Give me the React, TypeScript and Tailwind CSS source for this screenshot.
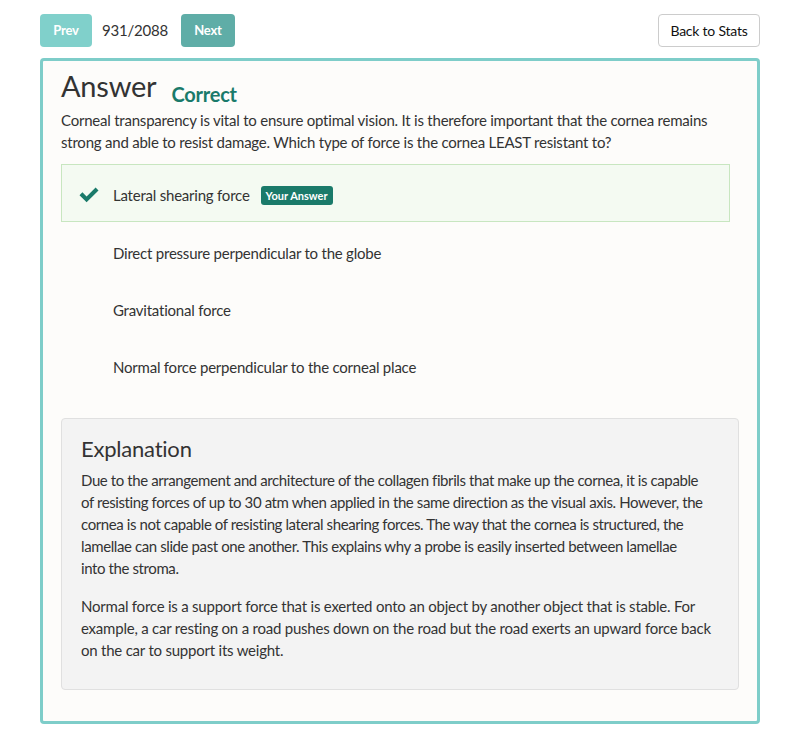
const OPTIONS = [
  { text: "Lateral shearing force", chosen: true },
  { text: "Direct pressure perpendicular to the globe", chosen: false },
  { text: "Gravitational force", chosen: false },
  { text: "Normal force perpendicular to the corneal place", chosen: false },
]

function Check() {
  return (
    <svg width="22" height="16" viewBox="0 0 22 16" aria-hidden>
      <path
        d="M1.5 8.2 L4.4 5.3 L8.6 9.5 L17.6 0.5 L20.5 3.4 L8.6 15.3 Z"
        fill="#1a7a6a"
      />
    </svg>
  )
}

export default function App() {
  return (
    <main className="min-h-[748px] bg-white pt-[14px] pb-6 font-['Lato',sans-serif] tracking-[-0.22px] text-[#333]">
      {/* Pager */}
      <div className="flex items-center justify-between px-[40px]">
        <div className="flex items-center">
          <button className="h-[33px] w-[52px] rounded bg-[#80d0cb] text-[13px] font-bold text-white">
            Prev
          </button>
          <span className="ml-[10px] text-[15px] text-[#333]">931/2088</span>
          <button className="ml-[13px] h-[33px] w-[54px] rounded bg-[#5fada7] text-[13px] font-bold text-white">
            Next
          </button>
        </div>
        <button className="h-[33px] w-[102px] rounded border border-[#ccc] bg-white text-[14px] text-[#111]">
          Back to Stats
        </button>
      </div>

      {/* Card */}
      <section className="mx-[40px] mt-[11px] rounded border-[3px] border-[#7ecdc9] bg-[#fdfcfa] px-[18px] pt-[7px] pb-[31px]">
        <div className="flex items-end">
          <h1 className="text-[29px] leading-[36px] text-[#333]">Answer</h1>
          <span className="ml-[15px] mb-[-4px] text-[20px] leading-[28px] font-bold text-[#1a7a6a]">
            Correct
          </span>
        </div>
        <p className="mt-[5px] text-[15px] leading-[22px]">
          Corneal transparency is vital to ensure optimal vision. It is therefore
          important that the cornea remains strong and able to resist damage.
          Which type of force is the cornea LEAST resistant to?
        </p>

        <ul className="mt-[11px] mr-[9px]">
          {OPTIONS.map((o) =>
            o.chosen ? (
              <li
                key={o.text}
                className="flex h-[58px] items-center border border-[#c8e6c0] bg-[#f4faf2] pt-[4px] pl-[16px] text-[15px]"
              >
                <Check />
                <span className="ml-[13px]">{o.text}</span>
                <span className="ml-[11px] rounded-[3px] bg-[#1a7a6a] px-[5px] py-[2px] text-[11px] leading-[15px] font-bold tracking-normal text-white">
                  Your Answer
                </span>
              </li>
            ) : (
              <li
                key={o.text}
                className="flex h-[57px] items-center pt-[5px] pl-[52px] text-[15px]"
              >
                {o.text}
              </li>
            ),
          )}
        </ul>

        {/* Explanation */}
        <div className="mt-[25px] rounded border border-[#e0e0e0] bg-[#f3f3f3] px-[19px] pt-[15px] pb-[28px]">
          <h2 className="text-[22px] leading-[30px] text-[#333]">Explanation</h2>
          <p className="mt-[5px] text-[15px] leading-[22px] tracking-[-0.4px]">
            Due to the arrangement and architecture of the collagen fibrils that
            make up the cornea, it is capable
            <br />
            of resisting forces of up to 30 atm when applied in the same
            direction as the visual axis. However, the
            <br />
            cornea is not capable of resisting lateral shearing forces. The way
            that the cornea is structured, the
            <br />
            lamellae can slide past one another. This explains why a probe is
            easily inserted between lamellae
            <br />
            into the stroma.
          </p>
          <p className="mt-[16px] text-[15px] leading-[22px]">
            Normal force is a support force that is exerted onto an object by
            another object that is stable. For example, a car resting on a road
            pushes down on the road but the road exerts an upward force back on
            the car to support its weight.
          </p>
        </div>
      </section>
    </main>
  )
}
